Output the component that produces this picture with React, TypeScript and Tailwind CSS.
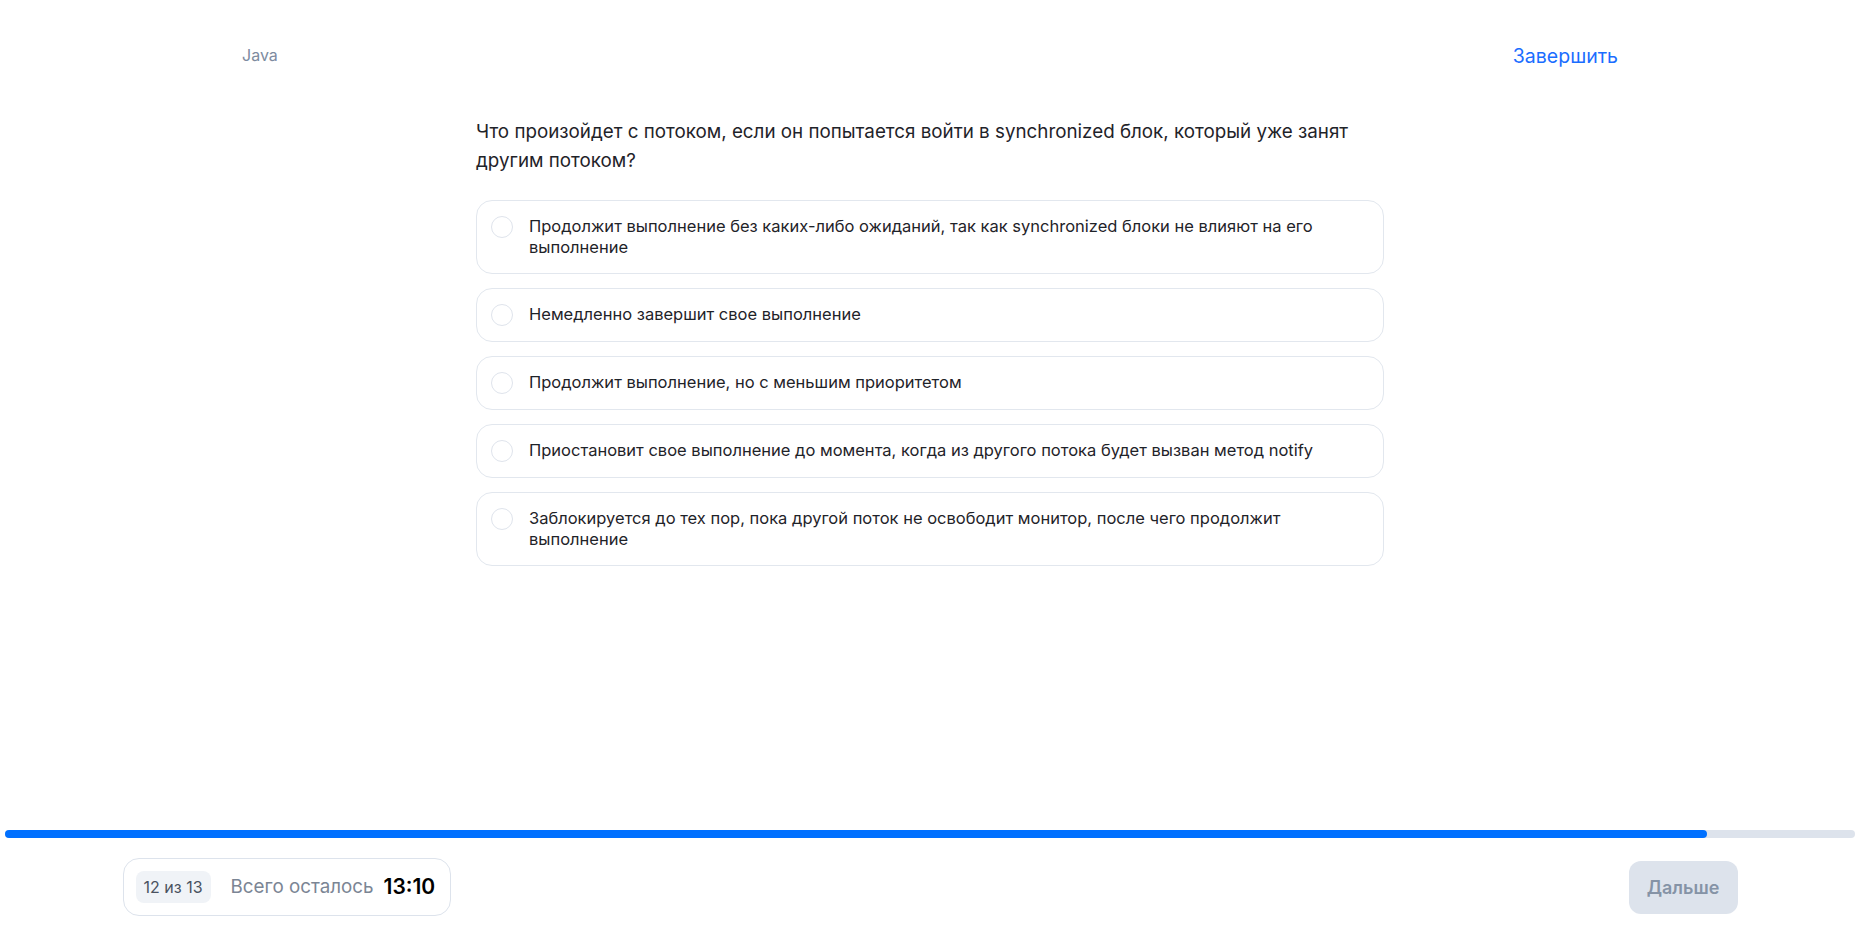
import React from "react";

const options = [
  "Продолжит выполнение без каких-либо ожиданий, так как synchronized блоки не влияют на его выполнение",
  "Немедленно завершит свое выполнение",
  "Продолжит выполнение, но с меньшим приоритетом",
  "Приостановит свое выполнение до момента, когда из другого потока будет вызван метод notify",
  "Заблокируется до тех пор, пока другой поток не освободит монитор, после чего продолжит выполнение",
];

export default function App() {
  const progress = 92;
  return (
    <div
      className="flex h-screen w-full flex-col bg-white"
      style={{ fontFamily: "Inter, 'Noto Sans', sans-serif" }}
    >
      <div className="mx-auto flex w-[1376px] items-center justify-between pt-[43px]">
        <span className="-mt-[2px] text-[16px] leading-[22px] text-[#7d8ba0]">Java</span>
        <button className="text-[19.5px] leading-[26px] text-[#1a6dff]">Завершить</button>
      </div>

      <div className="mx-auto mt-[48px] w-[908px]">
        <p className="text-[18.8px] leading-[29px] text-[#1f2329]">
          Что произойдет с потоком, если он попытается войти в synchronized блок, который уже занят другим потоком?
        </p>
        <div className="mt-[25px] flex flex-col gap-[14px]">
          {options.map((o) => (
            <label
              key={o}
              className="flex cursor-pointer items-start gap-[16px] rounded-[16px] border border-[#e2e7ee] bg-white px-[14px] py-[15px]"
            >
              <span className="h-[22px] w-[22px] shrink-0 rounded-full border-[1.5px] border-[#dfe4ec] bg-white" />
              <span className="pr-[40px] text-[16.5px] leading-[21px] text-[#1f2329]">{o}</span>
            </label>
          ))}
        </div>
      </div>

      <div className="mt-auto pb-[19px]">
        <div className="mx-[5px] h-[8px] rounded-full bg-[#dde3ec]">
          <div className="h-full rounded-full bg-[#0070ff]" style={{ width: `${progress}%` }} />
        </div>
        <div className="mx-auto mt-[20px] flex w-[1615px] items-center justify-between">
          <div className="flex items-center rounded-[16px] border border-[#dde3ec] py-[12px] pl-[12px] pr-[15px]">
            <span className="flex h-[32px] items-center rounded-[8px] bg-[#f0f3f7] px-[8px] text-[16px] text-[#4a5260]">
              12 из 13
            </span>
            <span className="ml-[20px] text-[18.8px] text-[#7b8594]">Всего осталось</span>
            <span className="ml-[10px] text-[21px] font-semibold text-black">13:10</span>
          </div>
          <button className="h-[53px] w-[109px] rounded-[12px] bg-[#dde3ec] text-[18px] font-semibold text-[#8593a6]">
            Дальше
          </button>
        </div>
      </div>
    </div>
  );
}
